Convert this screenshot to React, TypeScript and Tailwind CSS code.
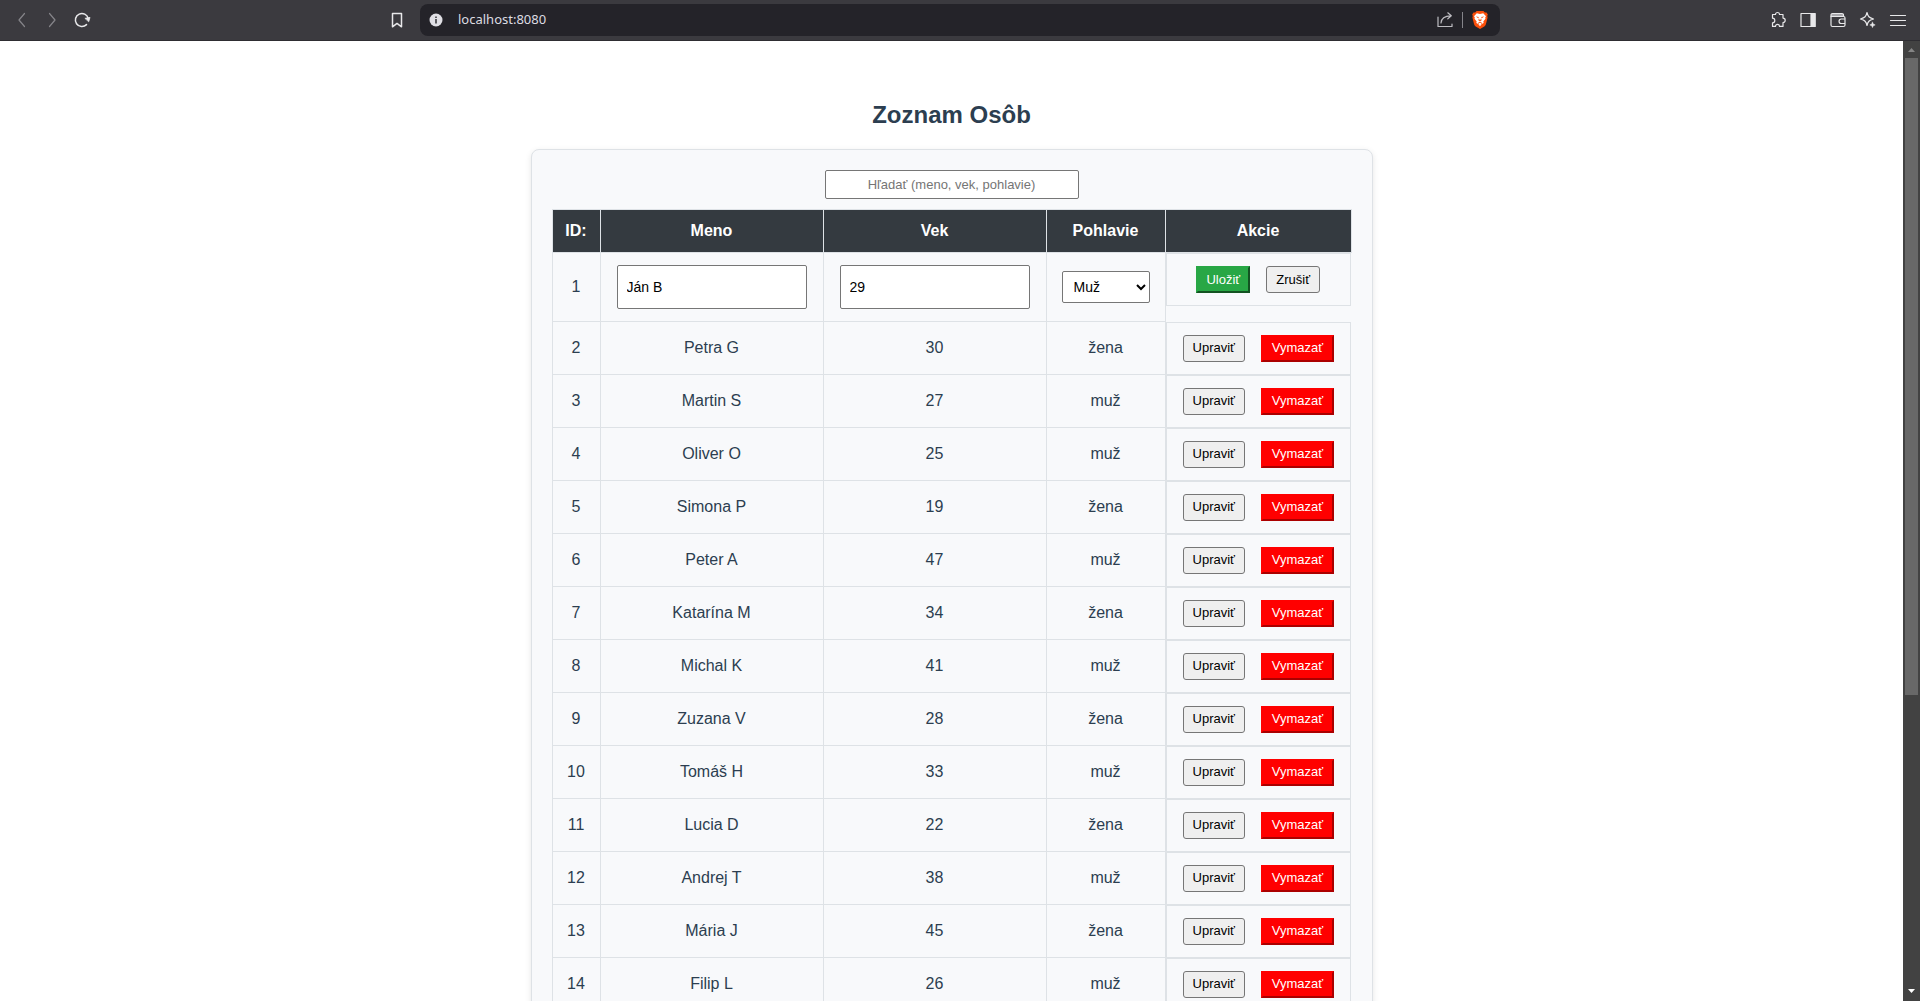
import type { ReactNode } from "react";

type Person = { id: number; name: string; age: number; sex: string };

const people: Person[] = [
  { id: 2, name: "Petra G", age: 30, sex: "žena" },
  { id: 3, name: "Martin S", age: 27, sex: "muž" },
  { id: 4, name: "Oliver O", age: 25, sex: "muž" },
  { id: 5, name: "Simona P", age: 19, sex: "žena" },
  { id: 6, name: "Peter A", age: 47, sex: "muž" },
  { id: 7, name: "Katarína M", age: 34, sex: "žena" },
  { id: 8, name: "Michal K", age: 41, sex: "muž" },
  { id: 9, name: "Zuzana V", age: 28, sex: "žena" },
  { id: 10, name: "Tomáš H", age: 33, sex: "muž" },
  { id: 11, name: "Lucia D", age: 22, sex: "žena" },
  { id: 12, name: "Andrej T", age: 38, sex: "muž" },
  { id: 13, name: "Mária J", age: 45, sex: "žena" },
  { id: 14, name: "Filip L", age: 26, sex: "muž" },
];

function BarButton({ label, children, className = "text-[#e8e8ea]" }: { label: string; children: ReactNode; className?: string }) {
  return (
    <button type="button" aria-label={label} className={`flex h-5 w-5 items-center justify-center ${className}`}>
      <svg width="20" height="20" viewBox="0 0 20 20" fill="none" stroke="currentColor" strokeWidth="1.2" strokeLinecap="round" strokeLinejoin="round">
        {children}
      </svg>
    </button>
  );
}

function BraveShield() {
  return (
    <button type="button" aria-label="Brave Shields" className="flex h-5 w-5 items-center justify-center">
      <svg width="16" height="18" viewBox="0 0 16 18">
        <path d="M4.600 0h6.800l1.500 1.600 1.600-.1 1.300 2-.6 1.500.4 1.600-1.700 6.600c-.3 1-.8 1.600-1.600 2.200L8 18l-4.300-2.600c-.8-.6-1.300-1.200-1.600-2.200L.4 6.600.8 5 .2 3.500l1.300-2 1.600.1z" fill="#fb4f0b" />
        <path d="M4.800 2.300L8 3l3.200-.7L14 5.200l-.8 1.300.3 1.300-2.200 2.700.4 1.200-1 1.100-1.100-.5L8 13.400l-1.600-1.100-1.100.5-1-1.100.4-1.200-2.200-2.700.3-1.300L2 5.200z" fill="#fff" />
        <path d="M3.800 5.600l3 .4-.5 1.200zM12.200 5.600l-3 .4.5 1.200zM7 7.300l-.7 2L8 10.200l1.700-.9-.7-2-.4 1.500H7.400zM5.800 11.200L8 10.800l2.200.4L8 12.100z" fill="#fb4f0b" />
        <path d="M6.200 13.600L8 12.900l1.800.7L8 15z" fill="#fff" />
      </svg>
    </button>
  );
}

function BrowserBar() {
  return (
    <header className="flex h-[41px] shrink-0 items-center border-b border-[#2e2d32] bg-[#3b3a3f] px-3">
      <nav className="flex flex-1 items-center gap-[10px]">
        <BarButton label="Back" className="text-[#858489]"><path d="M12.500 3.500L7 10l5.500 6.500" /></BarButton>
        <BarButton label="Forward" className="text-[#858489]"><path d="M7.500 3.500L13 10l-5.500 6.500" /></BarButton>
        <BarButton label="Reload">
          <path d="M14.500 14.600A6.500 6.500 0 1 1 16.200 8.500" strokeWidth="1.500" />
          <path d="M13.300 8.300L18 7.400l-1.200 4z" fill="currentColor" strokeWidth="0.800" />
        </BarButton>
        <BarButton label="Bookmark" className="mr-[13px] ml-auto text-[#e8e8ea]"><path d="M5.500 3.500h9v13.300L10 13.400l-4.500 3.400z" strokeWidth="1.500" /></BarButton>
      </nav>
      <div className="flex h-8 w-[57%] max-w-[1080px] items-center rounded-lg bg-[#242329] pr-[10px] pl-[9px]">
        <svg width="14" height="14" viewBox="0 0 14 14" aria-hidden="true">
          <circle cx="7" cy="7" r="6.500" fill="#e0dfe5" />
          <path d="M6.200 6h1.600v4.500H6.200zM6.200 3.400h1.600V5H6.200z" fill="#3b3a3f" />
        </svg>
        <input aria-label="Address" defaultValue="localhost:8080" className="ml-[15px] min-w-0 flex-1 font-['Noto_Sans',sans-serif] text-[13px] text-[#dddce2] outline-none" />
        <BarButton label="Share" className="text-[#bdbcc1]">
          <path d="M3 7v9.500h14V14M6 13c.3-4.500 3-7.200 9.800-7.200M12.800 2.800l3.500 3-3.500 3" />
        </BarButton>
        <span className="mx-[7px] h-4 w-px bg-[#85848a]" />
        <BraveShield />
      </div>
      <nav className="flex flex-1 items-center justify-end gap-[10px]">
        <BarButton label="Extensions">
          <path d="M4.500 4.500h3a2 2 0 0 1 4 0H15v3.600a2.200 2.200 0 0 1 0 4.400v3.900h-3.500a2 2 0 0 0-4 0h-3v-3.600a2.300 2.300 0 0 0 0-4.600z" />
        </BarButton>
        <BarButton label="Sidebar">
          <path d="M3 3.500h14v13H3z" />
          <path d="M13 3.500h4v13h-4z" fill="currentColor" />
        </BarButton>
        <BarButton label="Wallet">
          <path d="M3 6.500V5a1.500 1.500 0 0 1 1.500-1.500H14A1.500 1.500 0 0 1 15.500 5v1.500" fill="#a8a7ac" />
          <path d="M3 6.500h12.500A1.500 1.500 0 0 1 17 8v7a1.500 1.500 0 0 1-1.500 1.500h-11A1.500 1.500 0 0 1 3 15zM17 9h-3.700a2.200 2.200 0 0 0 0 4.500H17" />
        </BarButton>
        <BarButton label="Leo AI">
          <path d="M9 2.500c.9 4 2 5.200 6.500 6.500-4.500 1.300-5.600 2.500-6.500 6.500-.9-4-2-5.200-6.500-6.500C7 7.700 8.100 6.500 9 2.500z" />
          <path d="M14.500 12.200l.8 1.900 1.900.8-1.900.8-.8 1.900-.8-1.900-1.900-.8 1.900-.8z" fill="currentColor" strokeWidth="0.500" />
        </BarButton>
        <BarButton label="Menu"><path d="M2.500 5.500h15M2.500 10.500h15M2.500 15.500h15" /></BarButton>
      </nav>
    </header>
  );
}

function PlainButton({ children }: { children: ReactNode }) {
  return (
    <button type="button" className="h-[27px] rounded-[3px] border border-[#767676] bg-[#efefef] px-[9px] text-[13px] text-black">
      {children}
    </button>
  );
}

function SolidButton({ tone, children }: { tone: "save" | "delete"; children: ReactNode }) {
  const color = tone === "save" ? "border-[#28a745] bg-[#28a745]" : "min-w-[73px] border-[#ff0000] bg-[#ff0000]";
  return (
    <button type="button" className={`h-[27px] border-2 px-2 text-[13px] text-white [border-style:outset] ${color}`}>
      {children}
    </button>
  );
}

function Actions({ children }: { children: ReactNode }) {
  return (
    <td className="p-0 align-top">
      <div className="flex justify-center gap-4 border border-[#dee2e6] px-3 py-3">{children}</div>
    </td>
  );
}

const cell = "border border-[#dee2e6] px-[15px] py-3";
const heading = "border border-[#dee2e6] bg-[#343a40] px-2 py-3 font-bold text-white";
const field = "rounded-[2px] border border-[#767676] bg-white text-black";

function Scrollbar() {
  return (
    <div aria-hidden="true" className="flex w-[17px] shrink-0 flex-col items-center bg-[#424242]">
      <svg width="17" height="17" viewBox="0 0 17 17"><path d="M5 11l3.500-4 3.500 4z" fill="#858585" /></svg>
      <div className="w-[13px] flex-[638] bg-[#686868]" />
      <div className="flex-[288]" />
      <svg width="17" height="19" viewBox="0 0 17 19"><path d="M5 7l3.500 4L12 7z" fill="#fff" /></svg>
    </div>
  );
}

export default function App() {
  return (
    <div className="flex h-screen flex-col bg-white font-['Liberation_Sans',Arial,sans-serif]">
      <BrowserBar />
      <div className="flex min-h-0 flex-1">
        <main className="flex min-w-0 flex-1 flex-col items-center overflow-hidden pt-[60px] text-base text-[#2c3e50]">
          <h2 className="mb-5 text-2xl leading-7 font-bold">Zoznam Osôb</h2>
          <section className="flex w-full max-w-[842px] shrink-0 flex-col items-center rounded-lg border border-[#dee2e6] bg-[#f8f9fb] p-5 shadow-[0_2px_6px_rgba(0,0,0,0.1)]">
            <input
              type="text"
              aria-label="Hľadať"
              placeholder="Hľadať (meno, vek, pohlavie)"
              className={`${field} mb-[10px] h-[29px] w-[254px] text-center text-[13px] placeholder:text-[#757575]`}
            />
            <table className="w-full table-fixed text-center leading-[18px]">
              <colgroup>
                <col className="w-[48px]" />
                <col />
                <col />
                <col className="w-[119px]" />
                <col className="w-[186px]" />
              </colgroup>
              <thead>
                <tr>
                  <th className={heading}>ID:</th>
                  <th className={heading}>Meno</th>
                  <th className={heading}>Vek</th>
                  <th className={heading}>Pohlavie</th>
                  <th className={heading}>Akcie</th>
                </tr>
              </thead>
              <tbody>
                <tr>
                  <td className="border border-[#dee2e6] py-3">1</td>
                  <td className="border border-[#dee2e6] px-4 py-3">
                    <input aria-label="Meno" defaultValue="Ján B" className={`${field} block h-11 w-full px-[9px] text-sm`} />
                  </td>
                  <td className="border border-[#dee2e6] px-4 py-3">
                    <input aria-label="Vek" defaultValue="29" className={`${field} block h-11 w-full px-[9px] text-sm`} />
                  </td>
                  <td className={cell}>
                    <select aria-label="Pohlavie" defaultValue="Muž" className={`${field} mx-auto block h-8 w-full px-[7px] text-sm`}>
                      <option>Muž</option>
                      <option>Žena</option>
                    </select>
                  </td>
                  <Actions>
                    <SolidButton tone="save">Uložiť</SolidButton>
                    <PlainButton>Zrušiť</PlainButton>
                  </Actions>
                </tr>
                {people.map((p) => (
                  <tr key={p.id}>
                    <td className="border border-[#dee2e6] py-3">{p.id}</td>
                    <td className={cell}>{p.name}</td>
                    <td className={cell}>{p.age}</td>
                    <td className={cell}>{p.sex}</td>
                    <Actions>
                      <PlainButton>Upraviť</PlainButton>
                      <SolidButton tone="delete">Vymazať</SolidButton>
                    </Actions>
                  </tr>
                ))}
              </tbody>
            </table>
          </section>
        </main>
        <Scrollbar />
      </div>
    </div>
  );
}
